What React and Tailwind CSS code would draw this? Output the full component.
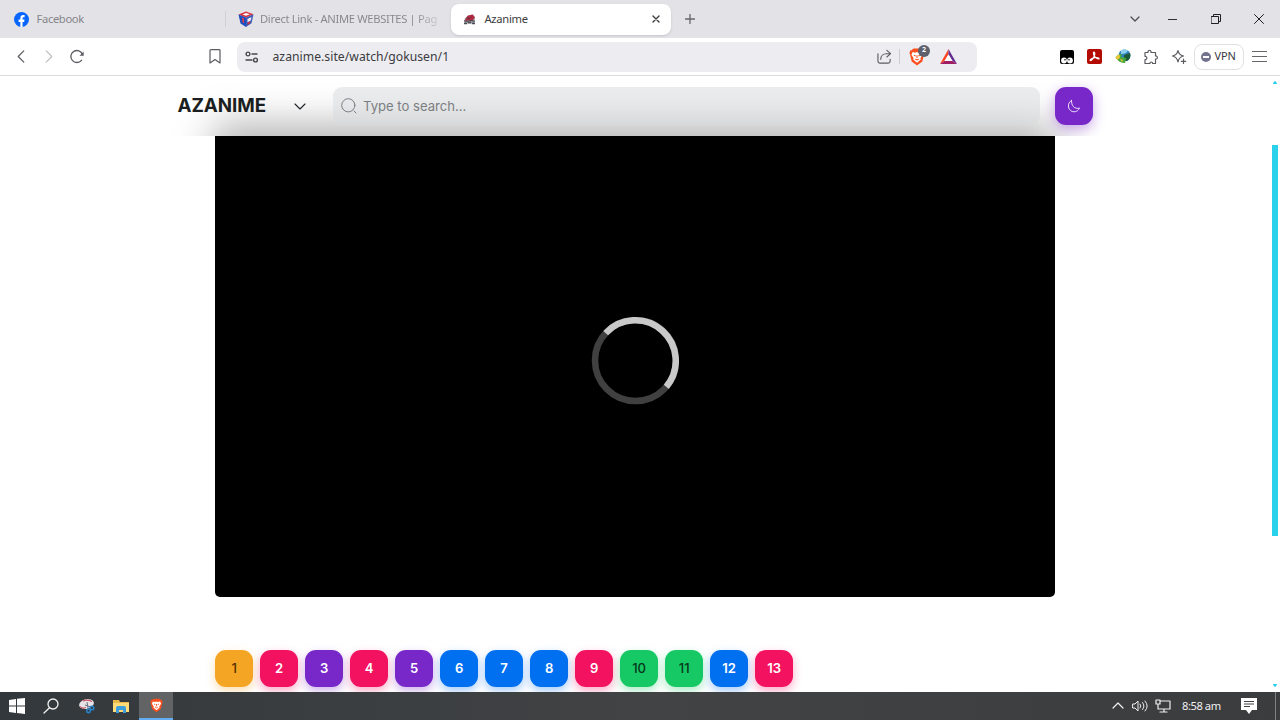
import React from "react";

const line = { fill: "none", stroke: "currentColor", strokeLinecap: "round", strokeLinejoin: "round" };

function Brave({ className }) {
  return (
    <svg viewBox="0 0 18 20" className={className}>
      <path d="M5 .5h8l2 2 1.500 0 1 3-.7 2-1.800 7.500-6 4.500-6-4.500L1.200 7.500l-.7-2 1-3H3z" fill="#fb4f1f" />
      <path d="M4 4.500l3 .6L9 4.500l2 .6 3-.6 1.300 3-2.500 4 .5 1.200L9 16.500l-4.300-3.800.5-1.200-2.500-4z" fill="#fff" />
      <path d="M5.500 8l2 .8M12.500 8l-2 .8M9 8v3M7 12.200L9 13.300l2-1.100" stroke="#fb542b" strokeWidth="1.200" fill="none" />
    </svg>
  );
}

function TabStrip() {
  return (
    <div className="flex h-[38px] items-center bg-[#e3e2e7] text-[#85858a]">
      <div className="flex h-full w-[225px] items-center pl-[14px]">
        <svg viewBox="0 0 16 16" className="size-[15px]">
          <circle cx="8" cy="8" r="8" fill="#0866ff" />
          <path d="M6.800 16v-5.300H4.900V8h1.900V6.600c0-2.400 1.100-3.500 3.200-3.500.5 0 1 .1 1.300.2v2.200h-.9c-1 0-1.300.4-1.300 1.300V8h2.100l-.4 2.700H9.100V16z" fill="#fff" />
        </svg>
        <span className="ml-[7.500px] pt-px text-[11.200px] tracking-[-0.35px]">Facebook</span>
      </div>
      <div className="flex h-full w-[226px] items-center">
        <div className="h-4 w-px bg-[#d0cfd5]" />
        <svg viewBox="0 0 16 16" className="ml-[12px] size-4">
          <path d="M.5 3.500L8 .5l7.500 2.700L8 6.500z" fill="#d8303c" />
          <path d="M.5 3.500L8 6.500V16l-5.500-3.500z" fill="#1c4fc0" />
          <path d="M8 6.500l7.500-3.300-2 9L8 16z" fill="#3d5cb8" />
          <path d="M4.500 3.500L8 2l4 1.200-4 1.500z" fill="#fff" />
          <path d="M4 6.500l2 1v5L4.500 11z" fill="#e33a45" />
          <path d="M9.500 8l4-2-.8 3.500-3.200 1.800z" fill="#f4f1f5" />
          <path d="M9.500 11.800l3-1.600-.5 2-2.500 1.700z" fill="#d8303c" />
        </svg>
        <span className="ml-[6px] w-[181px] whitespace-nowrap bg-gradient-to-r from-[#85858a] from-85% to-[#d5d4d9] bg-clip-text pt-px text-[11.200px] tracking-[-0.33px] text-transparent">Direct Link - ANIME WEBSITES | Pag</span>
      </div>
      <div className="flex h-[31px] w-[220px] items-center rounded-lg bg-white pl-3 text-[#3c3c40] shadow-sm">
        <svg viewBox="0 0 14 12" className="h-[11px] w-[13px]">
          <path d="M1 10L2 5l3-3 6-1.500 1.500 3L13 10z" fill="#8a8d94" />
          <path d="M2 7l3-5 5-1.500 3 3-3 3.500H5z" fill="#b5283f" />
          <path d="M1 7.500l4 .5 4-1 3.500 1M4 4l3 1 2-2" stroke="#4b3a44" strokeWidth="1" fill="none" />
          <path d="M1 10.500h3.500M5.500 9.500h3M9.500 10.500H13" stroke="#4a4d54" strokeWidth="1.500" />
        </svg>
        <span className="ml-[8.500px] pt-px text-[11.200px] tracking-[-0.3px]">Azanime</span>
        <svg viewBox="0 0 8 8" className="ml-auto mr-[11px] size-2"><path d="M1 1l6 6M7 1L1 7" {...line} strokeWidth="1.400" /></svg>
      </div>
      <svg viewBox="0 0 10 10" className="ml-[14px] size-[10px] text-[#66666b]"><path d="M5 .5v9M.5 5h9" {...line} strokeWidth="1.300" /></svg>
      <div className="ml-auto flex items-center pr-[16.500px] text-[#202024]">
        <svg viewBox="0 0 10 6" className="h-[6px] w-[10px] text-[#4d4d52]"><path d="M1 1l4 4 4-4" {...line} strokeWidth="1.300" /></svg>
        <div className="ml-[28px] h-px w-[9px] bg-[#303034]" />
        <svg viewBox="0 0 10 10" className="ml-[34px] size-[10px]"><path d="M.5 2.500h7v7h-7zM2.500 2.500v-2h7v7h-2" {...line} strokeLinejoin="miter" /></svg>
        <svg viewBox="0 0 10 10" className="ml-[33px] size-[10px]"><path d="M.5.5l9 9M9.500.5l-9 9" {...line} /></svg>
      </div>
    </div>
  );
}

function Toolbar() {
  return (
    <div className="flex h-[38px] items-center border-b border-[#dcdce0] bg-white text-[#5b5b61]">
      <svg viewBox="0 0 8 14" className="ml-[16.500px] h-[13px] w-2"><path d="M7 1L1 7l6 6" {...line} strokeWidth="1.300" /></svg>
      <svg viewBox="0 0 8 14" className="ml-5 h-[13px] w-2 text-[#bfbfc3]"><path d="M1 1l6 6-6 6" {...line} strokeWidth="1.300" /></svg>
      <svg viewBox="0 0 16 16" className="-mt-px ml-4 size-4"><path d="M12.500 12.300A6 6 0 1 1 13.500 6.500" {...line} strokeWidth="1.300" /><path d="M14.700 3.500v4.200h-4.200z" fill="currentColor" /></svg>
      <svg viewBox="0 0 12 15" className="ml-[124.500px] h-[15px] w-3"><path d="M1 1.500Q1 .7 2 .7h8q1 0 1 .8v12.500l-5-3.500L1 14z" {...line} strokeWidth="1.200" /></svg>
      <div className="ml-4 flex h-[30px] w-[740px] items-center rounded-lg bg-[#ededf1]">
        <svg viewBox="0 0 14 12" className="ml-[8px] h-3 w-[14px] text-[#46464c]"><g {...line} strokeWidth="1.400"><circle cx="3" cy="3" r="1.900" /><path d="M7 3h5M1 9h6" /><circle cx="10.500" cy="9" r="1.900" /></g></svg>
        <span className="ml-[13.500px] pt-px text-[12.200px] tracking-[0.03px] text-[#3b3b40]">azanime.site/watch/gokusen/1</span>
        <svg viewBox="0 0 16 16" className="ml-auto size-[15px]"><path d="M1 5v8q0 2 2 2h9q2 0 2-2v-2M4 11c0-4 3-6 6-6h4M10.500 1.500L14.500 5l-4 3.500" {...line} strokeWidth="1.200" /></svg>
        <div className="ml-[7px] h-[15px] w-px bg-[#cbcbd0]" />
        <div className="relative ml-[9px]">
          <Brave className="h-[18px] w-[16px]" />
          <span className="absolute -top-[3px] left-[9px] flex size-3 items-center justify-center rounded-full bg-[#5e606d] text-[7px] font-bold text-white">2</span>
        </div>
        <svg viewBox="0 0 17 15" className="ml-[15px] mr-5 h-[15px] w-[17px]"><path d="M8.500 0L0 15l4.500-3 4-6.500z" fill="#ff4724" /><path d="M8.500 0L17 15l-4.500-3-4-6.500z" fill="#662d91" /><path d="M0 15h17l-4.500-3h-8z" fill="#9e1f63" /><path d="M8.500 5.500l4 6.500h-8z" fill="#fff" /></svg>
      </div>
      <div className="ml-auto flex items-center pr-[13.500px]">
        <svg viewBox="0 0 14 14" className="size-[14px]"><rect width="14" height="14" rx="2" fill="#000" /><circle cx="4" cy="10.500" r="2.900" fill="#fff" /><circle cx="10" cy="10.500" r="2.900" fill="#fff" /><circle cx="5" cy="9.800" r=".8" /><circle cx="9" cy="9.800" r=".8" /></svg>
        <svg viewBox="0 0 15 15" className="ml-[13px] size-[15px]"><rect width="15" height="15" rx="2" fill="#b30b00" /><path d="M7 3c1 0 1 2 .3 4-.7 2-2.800 5-4 4.500-1-.6 2-2.500 4.500-2.800 2.500-.3 4.500.2 4.200 1-.4 1-4-1-4.800-3C6.500 5 6 3 7 3z" fill="none" stroke="#fff" strokeWidth="1.200" /></svg>
        <svg viewBox="0 0 16 15" className="ml-[13px] h-[15px] w-4"><circle cx="9.500" cy="6.500" r="6" fill="#2d7fbd" /><path d="M6 1.500q4-2.500 7 .5l-3 2.500-4 .5z" fill="#8fd0ec" /><path d="M9 6l6-2q1.500 5-3 8l-3-1z" fill="#1c5a36" /><path d="M.5 8.500Q3 4.500 7 5l-1 3 5 1-1 5q-6 0-9.500-5.500z" fill="#4aa83c" /><path d="M.5 8.500Q2 6 4.500 5.500l.5 3-2.500 2.500zM5 10l3 1-1 2z" fill="#f1c736" /></svg>
        <svg viewBox="0 0 16 16" className="ml-3 size-4"><path d="M2 3.500h3c-.5-3 3.500-3 3 0h4.500v3.500c2.500-.5 2.500 3.500 0 3v4.500H9.500c.5-2-3-2-2.500 0H2V10.500c2.500.5 2.500-3.500 0-3z" {...line} strokeWidth="1.200" /></svg>
        <svg viewBox="0 0 16 16" className="ml-3 size-4"><path d="M7 1.500q.8 4.500 5.500 5.500Q8 8 7 13 6 8 1.500 7 6.200 6 7 1.500zM12.500 10v4.500M10.300 12.300h4.400" {...line} strokeWidth="1.200" /></svg>
        <div className="ml-[7px] flex h-[26px] w-[50px] items-center rounded-lg border border-[#e0e0e5] pl-[6px] text-[11px] tracking-[-0.1px] text-[#38383d]">
          <span className="mr-1 flex size-[10px] shrink-0 items-center justify-center rounded-full bg-[#747491]"><span className="h-[2px] w-[6px] bg-white" /></span>
          VPN
        </div>
        <div className="ml-2 flex w-[15px] flex-col gap-1"><i className="h-px bg-[#66666b]" /><i className="h-px bg-[#66666b]" /><i className="h-px bg-[#66666b]" /></div>
      </div>
    </div>
  );
}

function SiteHeader() {
  return (
    <header className="relative h-[60px] overflow-hidden bg-white">
      <div className="absolute left-[214px] top-[48px] h-[120px] w-[843px] bg-black/30 blur-[19px]" />
      <div className="relative flex h-full items-center pl-[177.500px] font-['Inter']">
        <span className="w-[116px] pt-px text-[18.800px] font-bold tracking-[-0.07px] text-[#1b1e20]">AZANIME</span>
        <svg viewBox="0 0 12 7" className="h-[7px] w-3 text-[#202326]"><path d="M1 1l5 5 5-5" {...line} strokeWidth="1.100" /></svg>
        <div className="ml-[27.500px] flex h-[38px] w-[707px] items-center rounded-[9px] bg-[#d8dadd]/50 pl-2 text-[#7b7e81]">
          <svg viewBox="0 0 16 16" className="size-4"><circle cx="7.300" cy="7.300" r="6.600" {...line} /><path d="M13 13l2 2" {...line} /></svg>
          <span className="ml-[6px] pt-px text-[13.100px]">Type to search...</span>
        </div>
        <div className="ml-[15px] flex size-[37.500px] items-center justify-center rounded-[11px] bg-[#7828c8] text-[#eadcf8] shadow-[0_4px_13px_rgba(120,40,200,.4)]">
          <svg viewBox="0 0 14 14" className="size-[14px]"><path d="M4.500 1.500C2.500 2.500 1 5 1.500 8c.5 3 3 4.800 5.500 4.800 2.500 0 4.500-1.300 5.500-3.800-2 .8-4.500.3-6-1.300-1.600-1.700-2-4-2-6.200z" {...line} /></svg>
        </div>
      </div>
    </header>
  );
}

const orange = "bg-[#f5a524] text-[#4e3100] font-medium shadow-[0_4px_10px_rgba(245,165,36,.35)]";
const red = "bg-[#f31260] text-white font-semibold shadow-[0_4px_10px_rgba(243,18,96,.35)]";
const purple = "bg-[#7828c8] text-white font-semibold shadow-[0_4px_10px_rgba(120,40,200,.35)]";
const blue = "bg-[#0070f0] text-white font-semibold shadow-[0_4px_10px_rgba(0,112,240,.35)]";
const green = "bg-[#17c964] text-[#06371b] font-medium shadow-[0_4px_10px_rgba(23,201,100,.35)]";
const episodes = [orange, red, purple, red, purple, blue, blue, blue, red, green, green, blue, red];

function Page() {
  return (
    <main className="flex h-[616px] flex-col overflow-hidden bg-white">
      <SiteHeader />
      <div className="flex min-h-0 flex-1">
        <div className="ml-[215.400px] w-[839.600px]">
          <div className="flex h-[461px] items-center justify-center rounded-b-[5px] bg-black">
            <svg viewBox="0 0 88 88" className="-mt-[12px] size-[88px]">
              <circle cx="44.500" cy="43.500" r="40.500" fill="none" stroke="#404040" strokeWidth="6.500" />
              <path d="M14.700 16.100A40.500 40.500 0 0 1 75.300 69.800" fill="none" stroke="#c9c9c9" strokeWidth="6.500" />
            </svg>
          </div>
          <div className="mt-[52.700px] flex gap-[7.500px] font-['Inter']">
            {episodes.map((color, i) => (
              <button key={i} className={`flex size-[37.500px] shrink-0 items-center justify-center rounded-[11px] text-[13.100px] ${color}`}>{i + 1}</button>
            ))}
          </div>
        </div>
      </div>
    </main>
  );
}

function Scrollbar() {
  return (
    <div className="absolute right-[2px] top-[76px] flex h-[616px] w-[6.500px] flex-col items-center">
      <svg viewBox="0 0 4 3" className="mt-[5px] h-[3px] w-1"><path d="M0 3l1-2.500h2l1 2.500z" fill="#22cde8" /></svg>
      <div className="mt-[61px] h-[391px] w-full bg-[#2ad1eb]" />
      <svg viewBox="0 0 4 3" className="mb-[5px] mt-auto h-[3px] w-1"><path d="M0 0l1 2.500h2l1-2.500z" fill="#22cde8" /></svg>
    </div>
  );
}

function Taskbar() {
  return (
    <div className="relative flex h-7 items-center bg-gradient-to-r from-[#33383c] via-[#414344] to-[#3b3c3e] text-[#f0f0f0]">
      <svg viewBox="0 0 16 16" className="ml-[9px] size-4"><path d="M0 2l7-1v6.500H0zM8 .8L16 0v7.500H8zM0 8.500h7V15l-7-1zM8 8.500h8V16l-8-1z" fill="#fff" /></svg>
      <svg viewBox="0 0 16 16" className="ml-[17.500px] size-4"><circle cx="10" cy="6" r="5" {...line} strokeWidth="1.300" /><path d="M6.500 9.700L1 15" {...line} strokeWidth="1.300" /></svg>
      <svg viewBox="0 0 16 16" className="ml-[20.500px] size-4"><ellipse cx="7.500" cy="6" rx="7.500" ry="4.800" fill="#e6e2e8" transform="rotate(-14 7.500 6)" /><path d="M1 8.500q2 2.500 6 1M4 3q4-2 9 .5" stroke="#c9535f" strokeWidth="1.200" fill="none" /><path d="M8 4l1 6M6 7l6 2" stroke="#68717a" /><circle cx="9.500" cy="12.800" r="1.800" stroke="#287fc1" strokeWidth="1.600" fill="none" /><circle cx="13" cy="10" r="1.800" stroke="#287fc1" strokeWidth="1.600" fill="none" /></svg>
      <svg viewBox="0 0 16 14" className="ml-[18px] h-[14px] w-4"><path d="M0 1h6l1 2h9v10H0z" fill="#eab94b" /><path d="M0 4h16v9H0z" fill="#ffdc77" /><path d="M3 14V9q0-2 2-2h6q2 0 2 2v5h-3v-3H6v3z" fill="#3d9ddd" /></svg>
      <div className="ml-[10px] flex h-full w-[34px] items-center justify-center border-b-2 border-[#62adf1] bg-[#616365]"><Brave className="mt-px h-[15px] w-[13px]" /></div>
      <div className="ml-auto flex items-center">
        <svg viewBox="0 0 12 7" className="h-[7px] w-3"><path d="M1 6l5-5 5 5" {...line} strokeWidth="1.200" /></svg>
        <svg viewBox="0 0 16 14" className="ml-[8px] h-[14px] w-4"><path d="M1 5h2l3-3v10L3 9H1zM8 5q2 2 0 4M10.500 3.500q3 3.500 0 7M13 2q4.500 5 0 10" {...line} /></svg>
        <svg viewBox="0 0 16 14" className="ml-[7px] h-[14px] w-4"><path d="M5 2h10v8H3V6M9 10v3M5 13h7M1 1h4v4H1zM3 5v2" {...line} strokeWidth="1.200" /></svg>
        <span className="ml-[11px] w-[40px] whitespace-nowrap text-[11.200px] tracking-[-0.45px]">8:58 am</span>
        <svg viewBox="0 0 16 16" className="ml-[19px] mr-[23px] size-4"><path d="M0 0h16v12h-5l-3 4-3-4H0z" fill="#fff" /><path d="M3 3.500h10M3 6h10M3 8.500h6" stroke="#404143" /></svg>
      </div>
      <div className="absolute right-[4px] top-0 h-full w-px bg-[#808183]" />
    </div>
  );
}

export default function App() {
  return (
    <div className="relative h-[720px] w-[1280px] overflow-hidden bg-white font-['Noto_Sans',sans-serif]">
      <TabStrip />
      <Toolbar />
      <Page />
      <Scrollbar />
      <Taskbar />
    </div>
  );
}
